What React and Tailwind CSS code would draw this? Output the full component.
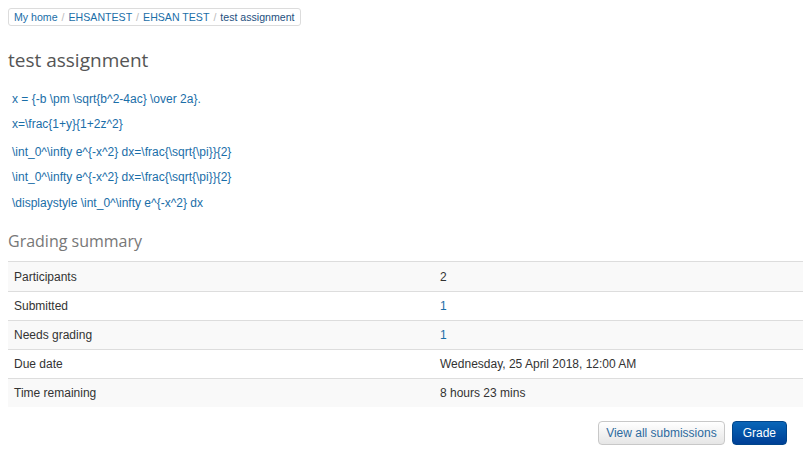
import React from 'react';

const crumbs = ['My home', 'EHSANTEST', 'EHSAN TEST', 'test assignment'];

const formulas = [
    { text: 'x = {-b \\pm \\sqrt{b^2-4ac} \\over 2a}.', mt: 'mt-0' },
    { text: 'x=\\frac{1+y}{1+2z^2}', mt: 'mt-[13px]' },
    { text: '\\int_0^\\infty e^{-x^2} dx=\\frac{\\sqrt{\\pi}}{2}', mt: 'mt-[16px]' },
    { text: '\\int_0^\\infty e^{-x^2} dx=\\frac{\\sqrt{\\pi}}{2}', mt: 'mt-[13px]' },
    { text: '\\displaystyle \\int_0^\\infty e^{-x^2} dx', mt: 'mt-[14px]' },
];

const rows = [
    { label: 'Participants', value: '2', link: false },
    { label: 'Submitted', value: '1', link: true },
    { label: 'Needs grading', value: '1', link: true },
    { label: 'Due date', value: 'Wednesday, 25 April 2018, 12:00 AM', link: false },
    { label: 'Time remaining', value: '8 hours 23 mins', link: false },
];

const App = () => {
    return (
        <div className="min-h-screen bg-white pl-2 pt-2 font-['Liberation_Sans',Arial,sans-serif] text-[12px] text-[#333]">
            {/* Breadcrumb */}
            <div className="inline-flex h-[18px] items-center rounded-[3px] border border-[#dcdcdc] px-[5px] text-[10.6px] leading-none">
                {crumbs.map((c, i) => (
                    <span key={c} className="flex items-center">
                        <span className={i === crumbs.length - 1 ? 'text-[#1d4f80]' : 'text-[#1a6ea8]'}>{c}</span>
                        {i < crumbs.length - 1 && <span className="px-[4px] text-[#bbb]">/</span>}
                    </span>
                ))}
            </div>

            <h2 className="mt-[22px] font-['Open_Sans',sans-serif] text-[19px] leading-[24px] text-[#555]">test assignment</h2>

            {/* Intro with tex strings */}
            <div className="mt-[20px] pl-1 leading-[14px] text-[#1a6ea8]">
                {formulas.map((f, i) => (
                    <p key={i} className={f.mt + ' h-[12px]'}>{f.text}</p>
                ))}
            </div>

            <h3 className="mt-[22px] font-['Open_Sans',sans-serif] text-[16px] leading-[22px] text-[#777]">Grading summary</h3>

            {/* Summary table */}
            <div className="mt-[9px] border-t border-[#ddd]">
                {rows.map((r, i) => (
                    <div
                        key={r.label}
                        className={`flex h-[29px] items-center ${i > 0 ? 'border-t border-[#ddd]' : ''} ${i % 2 === 0 ? 'bg-[#f9f9f9]' : 'bg-white'}`}
                    >
                        <div className="w-[426px] pl-[6px]">{r.label}</div>
                        <div className={`pl-[6px] ${r.link ? 'text-[#1a6ea8]' : ''}`}>{r.value}</div>
                    </div>
                ))}
            </div>

            {/* Actions */}
            <div className="mt-[14px] flex justify-end gap-[7px] pr-[16px]">
                <button className="h-[24px] rounded-[4px] border border-[#c8c8c8] bg-gradient-to-b from-white to-[#e6e6e6] px-[7px] text-[12px] text-[#2d6a9e]">
                    View all submissions
                </button>
                <button className="h-[24px] rounded-[4px] border border-[#00458a] bg-gradient-to-b from-[#0a66b8] to-[#003f96] px-[10px] text-[12px] text-white">
                    Grade
                </button>
            </div>
        </div>
    );
};

export default App;
